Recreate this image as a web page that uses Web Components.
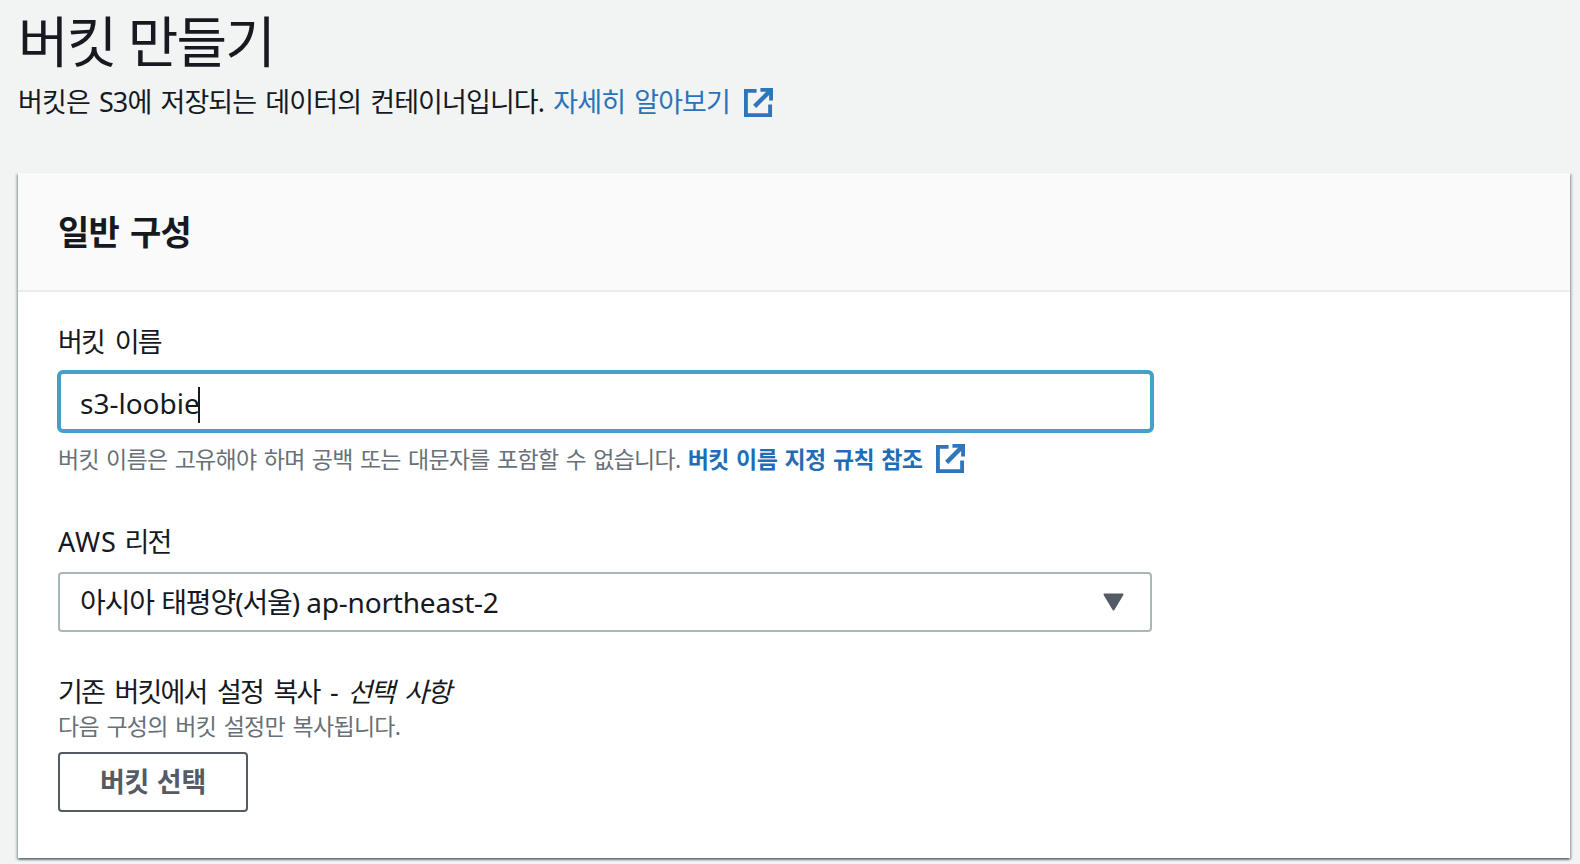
<!DOCTYPE html>
<html lang="ko"><head><meta charset="utf-8"><title>버킷 만들기</title>
<style>
html,body{margin:0;height:100%;overflow:hidden;background:#f2f3f3}
body{font-family:"Noto Sans","Noto Sans CJK KR",sans-serif;color:#16191f}
</style></head><body>
<page-head>
  <span slot="title">버킷 만들기</span>
  버킷은 S3에 저장되는 데이터의 컨테이너입니다. <ext-link>자세히 알아보기</ext-link>
</page-head>
<form-card heading="일반 구성">
  <form-field label="버킷 이름">
    <text-box value="s3-loobie"></text-box>
    <span slot="hint">버킷 이름은 고유해야 하며 공백 또는 대문자를 포함할 수 없습니다. <ext-link bold>버킷 이름 지정 규칙 참조</ext-link></span>
  </form-field>
  <form-field style="margin-top:43px" gap="10">
    <span slot="label" style="word-spacing:2.5px"><span style="letter-spacing:.9px">AWS</span> 리전</span>
    <select-box>아시아 태평양(서울) <span style="letter-spacing:-.2px">ap-northeast-2</span></select-box>
  </form-field>
  <form-field style="margin-top:40px">
    <span slot="label" style="word-spacing:5.2px">기존 버킷에서 설정 복사 - <i>선택 사항</i></span>
    <span slot="desc">다음 구성의 버킷 설정만 복사됩니다.</span>
    <ghost-button>버킷 선택</ghost-button>
  </form-field>
</form-card>
<script>
function def(name, html, init){
  customElements.define(name, class extends HTMLElement{
    constructor(){super();this.attachShadow({mode:'open'}).innerHTML=html;}
    connectedCallback(){init&&init.call(this,this.shadowRoot);}
  });
}
def('page-head',`<style>
:host{display:block;padding:0 18px;height:173px;box-sizing:border-box}
h1{margin:0;padding-top:7px;font-size:55px;line-height:68px;font-weight:400;letter-spacing:-1.9px;color:#16191f}
p{margin:0;padding-top:9px;font-size:27px;line-height:36px;letter-spacing:-.9px;word-spacing:3px;color:#16191f;white-space:nowrap}
</style><h1><slot name="title"></slot></h1><p><slot></slot></p>`);
def('ext-link',`<style>
:host{display:inline;color:#2a73b9}
:host([bold]){font-weight:700;color:#1f6db5;letter-spacing:-.6px}
svg{display:inline-block;vertical-align:-5px;margin-left:14px}
</style><slot></slot><svg width="29" height="29" viewBox="0 0 30 30" fill="none" stroke="#2e75bb" stroke-width="4"><path d="M13 3H2v25h25V17"/><path d="M17 2h11v11" stroke-width="4"/><path d="M27 3 11 19" stroke-width="4.5"/></svg>`);
def('form-card',`<style>
:host{display:block;margin:0 10px 0 18px;background:#fff;height:685px;box-sizing:border-box;
box-shadow:0 2px 2px 0 rgba(0,28,36,.45),2px 1px 2px 0 rgba(0,28,36,.2),-2px 1px 2px 0 rgba(0,28,36,.2)}
header{background:#fafafa;border-bottom:2px solid #eaeded;height:119px;box-sizing:border-box;padding:0 40px;display:flex;align-items:center}
h2{margin:0;font-size:34px;font-weight:700;letter-spacing:-.8px;word-spacing:3px;line-height:40px;color:#16191f}
main{display:block;padding:30px 40px 0;width:1096px}
</style><header><h2></h2></header><main><slot></slot></main>`,function(s){s.querySelector('h2').textContent=this.getAttribute('heading');});
def('form-field',`<style>
:host{display:block}
.l{font-size:27px;line-height:40px;letter-spacing:-1.8px;word-spacing:5.5px;color:#16191f}
.d{font-size:23px;line-height:32px;letter-spacing:-.7px;word-spacing:2.2px;color:#687078;margin:-2px 0 10px}
.c{margin-top:8px}
.h{font-size:23px;line-height:40px;letter-spacing:-.7px;word-spacing:1.9px;color:#687078;margin-top:6px;white-space:nowrap}
</style><div class="l"><slot name="label"></slot></div><div class="d"><slot name="desc"></slot></div><div class="c"><slot></slot></div><div class="h"><slot name="hint"></slot></div>`,function(s){
  const a=this.getAttribute('label');
  if(a) s.querySelector('slot[name=label]').textContent=a;
  if(!this.querySelector('[slot=desc]')) s.querySelector('.d').style.display='none';
  else s.querySelector('.c').style.marginTop='0';
  if(!this.querySelector('[slot=hint]')) s.querySelector('.h').style.display='none';
  if(this.hasAttribute('gap')) s.querySelector('.c').style.marginTop=this.getAttribute('gap')+'px';
});
def('text-box',`<style>
:host{display:block;width:1097px;height:63px;margin-left:-1px;box-sizing:border-box;border:4px solid #44a0c8;border-radius:6px;background:#fff;padding:2px 19px 0;
font-size:28px;line-height:55px;letter-spacing:0;color:#16191f}
i{display:inline-block;width:2px;height:36px;background:#16191f;vertical-align:-9px;margin-left:-2px}
</style><span></span><i></i>`,function(s){s.querySelector('span').textContent=this.getAttribute('value');});
def('select-box',`<style>
:host{display:flex;align-items:center;justify-content:space-between;width:1094px;height:60px;box-sizing:border-box;border:2px solid #aab7b8;border-radius:4px;background:#fff;padding:0 26px 2px 20px;
font-size:28px;letter-spacing:-1.1px;word-spacing:1px;color:#16191f}
svg{display:block;margin-top:2px}
</style><span><slot></slot></span><svg width="21" height="18" viewBox="0 0 21 18"><path d="M1.5 1.5h18L10.5 16.5Z" fill="#545b64" stroke="#545b64" stroke-width="2" stroke-linejoin="round"/></svg>`);
def('ghost-button',`<style>
:host{display:inline-flex;align-items:center;justify-content:center;width:190px;height:60px;box-sizing:border-box;border:2px solid #545b64;border-radius:4px;background:#fff;padding-bottom:3px;
font-size:27px;font-weight:700;letter-spacing:-.3px;word-spacing:1px;color:#545b64}
</style><slot></slot>`);
</script>
</body></html>
